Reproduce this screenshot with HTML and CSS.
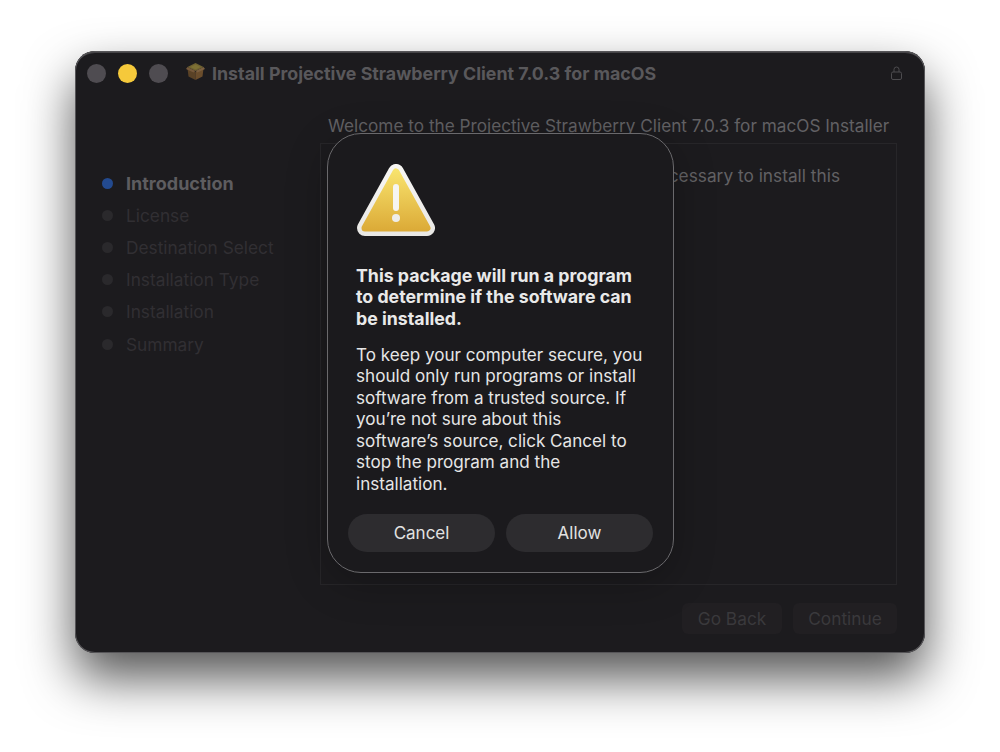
FILE: index.html
```html
<!DOCTYPE html>
<html lang="en">
<head>
<meta charset="utf-8">
<title>Install Projective Strawberry Client</title>
<link rel="stylesheet" href="styles.css">
</head>
<body>
<div class="window">
  <header class="titlebar">
    <div class="lights">
      <span class="light"></span>
      <span class="light light-yellow"></span>
      <span class="light"></span>
    </div>
    <svg class="pkg" viewBox="0 0 20 20" aria-hidden="true">
      <path d="M2 7.500 10 11v8l-7-3.500z" fill="#5a4226"/>
      <path d="M18 7.500 10 11v8l7-3.500z" fill="#6a4d2c"/>
      <path d="M2 6 10 2l8 4-8 4z" fill="#6f6230"/>
      <path d="M5 6 10 3.500 15 6l-5 2.500z" fill="#7d7034"/>
      <path d="M2 6 0.500 8 8 11.500 10 10z" fill="#75583a"/>
      <path d="M18 6 19.500 8 12 11.500 10 10z" fill="#7c6040"/>
    </svg>
    <h1 class="win-title">Install Projective Strawberry Client 7.0.3 for macOS</h1>
    <svg class="lock" viewBox="0 0 11 14" aria-hidden="true">
      <rect x="0.500" y="6" width="10" height="7.500" rx="1.500" fill="none" stroke="#4d4c4f"/>
      <path d="M3 6V3.500a2.500 2.500 0 0 1 5 0V6" fill="none" stroke="#4d4c4f"/>
    </svg>
  </header>
  <div class="main">
    <nav class="steps">
      <div class="step step-active"><span class="dot"></span>Introduction</div>
      <div class="step"><span class="dot"></span>License</div>
      <div class="step"><span class="dot"></span>Destination Select</div>
      <div class="step"><span class="dot"></span>Installation Type</div>
      <div class="step"><span class="dot"></span>Installation</div>
      <div class="step"><span class="dot"></span>Summary</div>
    </nav>
    <section class="content">
      <h2 class="heading">Welcome to the Projective Strawberry Client 7.0.3 for macOS Installer</h2>
      <div class="panel">
        <p class="panel-text">You will be guided through the steps necessary to install this<br>software.</p>
      </div>
      <div class="actions">
        <span class="ghost ghost-back">Go Back</span>
        <span class="ghost ghost-next">Continue</span>
      </div>
    </section>
  </div>
</div>
<div class="dialog" role="alertdialog">
  <svg class="warn" viewBox="0 0 78 72" aria-hidden="true">
    <defs>
      <linearGradient id="warnfill" gradientUnits="userSpaceOnUse" x1="0" y1="4" x2="0" y2="68">
        <stop offset="0" stop-color="#f9e56f"/>
        <stop offset="1" stop-color="#dba936"/>
      </linearGradient>
      <linearGradient id="warnrim" gradientUnits="userSpaceOnUse" x1="0" y1="0" x2="0" y2="72">
        <stop offset="0" stop-color="#f8f7f4"/>
        <stop offset="1" stop-color="#e8e7e4"/>
      </linearGradient>
    </defs>
    <path d="M39 8 70 64H8z" fill="url(#warnrim)" stroke="url(#warnrim)" stroke-width="16" stroke-linejoin="round"/>
    <path d="M39 8 70 64H8z" fill="url(#warnfill)" stroke="url(#warnfill)" stroke-width="7" stroke-linejoin="round"/>
    <rect x="36" y="20" width="6" height="27" rx="3" fill="#f6f5f2"/>
    <circle cx="39" cy="54" r="4" fill="#eeede9"/>
  </svg>
  <h3 class="d-title">This package will run a program<br>to determine if the software can<br>be installed.</h3>
  <p class="d-text">To keep your computer secure, you<br>should only run programs or install<br>software from a trusted source. If<br>you’re not sure about this<br>software’s source, click Cancel to<br>stop the program and the<br>installation.</p>
  <div class="d-buttons">
    <button class="d-btn" type="button">Cancel</button>
    <button class="d-btn" type="button">Allow</button>
  </div>
</div>
</body>
</html>
```
FILE: styles.css
```css
* { box-sizing: border-box; }
html, body { margin: 0; height: 752px; overflow: hidden; }
body {
  background: #fff;
  font-family: Inter, "Liberation Sans", sans-serif;
  padding: 51px 75px 0;
  position: relative;
}
.window {
  width: 850px;
  height: 602px;
  background: #1c1b1e;
  border-radius: 20px;
  box-shadow: inset 0 0 0 1px #565558, inset 0 2px 0 #454447, 0 25px 50px rgba(0,0,0,.67);
  display: flex;
  flex-direction: column;
}
.titlebar {
  height: 44px;
  flex: none;
  display: flex;
  align-items: center;
  padding: 0 23px 0 12px;
}
.lights { display: flex; gap: 12px; }
.light { width: 19px; height: 19px; border-radius: 50%; background: #4f4c51; }
.light-yellow { background: #f5c93b; }
.pkg { width: 21px; height: 20px; margin-left: 17px; flex: none; position: relative; top: -2px; }
.win-title {
  margin: 0 0 0 6px;
  font-size: 17.820px;
  font-weight: 700;
  color: #59585b;
  white-space: nowrap;
  flex: 1;
}
.lock { width: 11px; height: 14px; flex: none; }
.main { flex: 1; display: flex; min-height: 0; }
.steps { width: 245px; flex: none; padding: 72px 0 0 27px; }
.step {
  height: 32.200px;
  display: flex;
  align-items: center;
  gap: 13px;
  font-size: 17.300px;
  color: #312f33;
  white-space: nowrap;
}
.dot { width: 11px; height: 11px; border-radius: 50%; background: #2a292c; flex: none; }
.step-active { font-weight: 700; font-size: 18px; color: #5e5d60; }
.step-active .dot { background: #234a8f; }
.content { flex: 1; display: flex; flex-direction: column; padding-right: 28px; }
.heading {
  margin: 19px 0 0 8px;
  font-size: 17.210px;
  line-height: 23px;
  font-weight: 400;
  color: #626164;
  white-space: nowrap;
}
.panel {
  height: 442px;
  margin-top: 6px;
  border: 1px solid #272629;
  padding: 21px 0 0 25px;
}
.panel-text { margin: 0; font-size: 17.300px; line-height: 22px; color: #626164; white-space: nowrap; }
.actions { display: flex; justify-content: flex-end; gap: 11px; margin-top: 18px; }
.ghost {
  height: 31px;
  border-radius: 6px;
  background: #211f22;
  color: #3a393c;
  font-size: 17.300px;
  display: flex;
  align-items: center;
  justify-content: center;
}
.ghost-back { width: 100px; }
.ghost-next { width: 104px; }
.dialog {
  position: absolute;
  left: 327px;
  top: 133px;
  width: 347px;
  height: 440px;
  background: #1b1a1d;
  border: 1px solid #6a696c;
  border-radius: 34px;
  box-shadow: 0 10px 40px rgba(0,0,0,.25);
  padding: 30px 20px 20px 28px;
  display: flex;
  flex-direction: column;
}
.warn { width: 78px; height: 72px; margin-left: 1px; flex: none; display: block; }
.d-title {
  margin: 29px 0 0;
  font-size: 17.750px;
  line-height: 21.300px;
  font-weight: 700;
  color: #e9e9e9;
  white-space: nowrap;
}
.d-text {
  margin: 15px 0 0;
  font-size: 17.100px;
  line-height: 21.500px;
  font-weight: 400;
  color: #e6e6e6;
  white-space: nowrap;
}
.d-buttons { display: flex; gap: 11px; margin: 20px 0 0 -8px; }
.d-btn {
  width: 147.500px;
  height: 38px;
  border: 0;
  border-radius: 19px;
  background: #2d2c2f;
  color: #e2e2e2;
  font: 400 17px Inter, "Liberation Sans", sans-serif;
}
```
